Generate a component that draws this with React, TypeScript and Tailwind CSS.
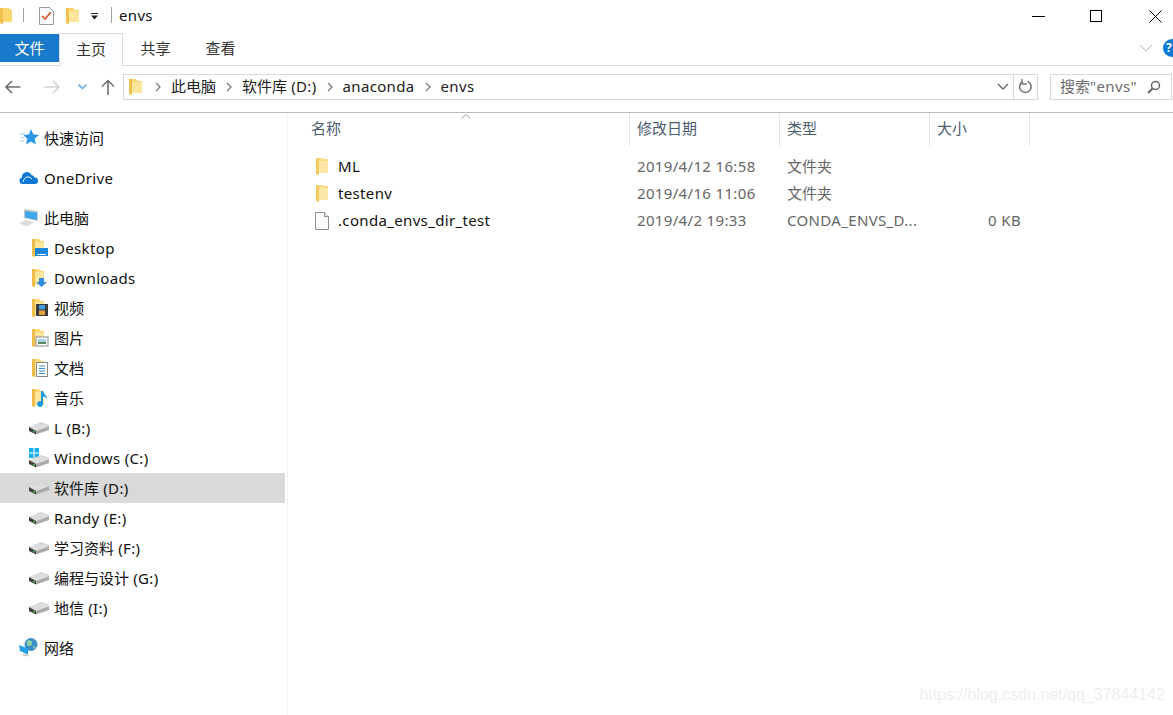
import React from "react";

const FONT = "font-['Noto_Sans','Noto_Sans_CJK_SC',sans-serif]";

// Latin runs come out a little narrower than in the picture, so they get some tracking
const T = ({ children }: { children: string }) => (
  <>
    {children.split(/([\u0000-\u02ff]+)/).map((part, i) =>
      /^[\u0000-\u02ff]+$/.test(part) ? (
        <span key={i} className="tracking-[0.34px]">{part}</span>
      ) : (
        part
      )
    )}
  </>
);

const Folder = ({ className = "" }: { className?: string }) => (
  <svg width="13" height="18" viewBox="0 0 13 18" className={className}>
    <path d="M0 1h7l2 2h4v12H3v2l-3-1z" fill="#fbd56e" />
    <path d="M3 4h10v11H3z" fill="#fde59b" />
    <path d="M0 1h3v16l-3-1z" fill="#f2c04f" />
  </svg>
);

const Drive = () => (
  <svg width="20" height="14" viewBox="0 0 20 14">
    <path d="M0 6 12 1l8 3v2L7 10z" fill="#d0d0d0" />
    <path d="M0 6l7 4 13-5-8-3z" fill="#dedede" />
    <path d="M0 6l7 4v3.500L0 10z" fill="#3e3e3e" />
    <path d="M7 10l13-4.500V9L7 13.500z" fill="#a9a9a9" />
    <rect x="4" y="10" width="2" height="1.500" fill="#3ec85a" />
  </svg>
);

const NavFolder = ({ children }: { children?: React.ReactNode }) => (
  <svg width="20" height="20" viewBox="0 0 20 20">
    <path d="M3 1h7l2 2h3v14H6v2l-3-1z" fill="#fbd56e" />
    <path d="M6 4h9v13H6z" fill="#fde59b" />
    <path d="M3 1h3v18l-3-1z" fill="#eebb4d" />
    {children}
  </svg>
);

const navIcons: Record<string, React.ReactNode> = {
  star: (
    <svg width="20" height="20" viewBox="0 0 20 20">
      <path d="M12 1l2.300 5.300 5.700.6-4.300 3.900 1.300 5.700-5-3-5 3 1.300-5.700-3.800-3.600 5.500-.9z" fill="#2a98e6" />
      <path d="M1 6h5M2 9.500h3M1 13h4" stroke="#8ecbf2" strokeWidth="1" />
    </svg>
  ),
  cloud: (
    <svg width="20" height="20" viewBox="0 0 20 20">
      <path d="M3.500 16a3.300 3.300 0 0 1-.5-6.500A5 5 0 0 1 12.500 7a4 4 0 0 1 3 2.500 3.300 3.300 0 0 1 1 6.500z" fill="#0a78d4" />
      <path d="M4 14c1-4 3-5 5-5s3 1 4 2" fill="none" stroke="#fff" strokeWidth="1" />
    </svg>
  ),
  pc: (
    <svg width="20" height="20" viewBox="0 0 20 20">
      <path d="M5 1l14 2v10L5 10z" fill="#c9c9c9" />
      <path d="M6 3l12 1.500v7.500L6 9.500z" fill="#3fa7ec" />
      <path d="M0 15l7-3 8 2-7 4.500z" fill="#dcdcdc" />
    </svg>
  ),
  desktop: (
    <NavFolder>
      <rect x="6" y="10" width="13" height="8" fill="#1a86d9" />
      <rect x="8" y="16" width="9" height="1" fill="#fff" />
    </NavFolder>
  ),
  downloads: (
    <NavFolder>
      <path d="M10 10h5v4h3l-5.500 5L7 14h3z" fill="#2f8edb" />
    </NavFolder>
  ),
  video: (
    <NavFolder>
      <rect x="7" y="6" width="12" height="12" fill="#3a3a3a" />
      <rect x="10" y="7" width="6" height="4.500" fill="#3f9de0" />
      <rect x="10" y="12.500" width="6" height="4.500" fill="#e2a13a" />
    </NavFolder>
  ),
  pictures: (
    <NavFolder>
      <rect x="7" y="9" width="12" height="9" fill="#fff" stroke="#8a8a8a" />
      <rect x="9" y="11" width="8" height="3" fill="#a8d0ec" />
      <rect x="9" y="14" width="8" height="2" fill="#5b8a5b" />
    </NavFolder>
  ),
  docs: (
    <NavFolder>
      <rect x="7.500" y="4.500" width="11" height="14" fill="#fff" stroke="#8a8a8a" />
      <path d="M10 8h6M10 10.500h6M10 13h6M10 15.500h6" stroke="#3f8fd0" />
    </NavFolder>
  ),
  music: (
    <NavFolder>
      <path d="M12 3h2c.5 3 4 4 4 8-1-1.500-2.500-2.500-4-2.500V16a3 3 0 1 1-2-2.800z" fill="#1b9ae8" />
    </NavFolder>
  ),
  drive: <Drive />,
  windows: (
    <svg width="20" height="20" viewBox="0 0 20 20">
      <path d="M0 0h4.500v4.500H0zM5.500 0H10v4.500H5.500zM0 5.500h4.500V10H0zM5.500 5.500H10V10H5.500z" fill="#19b0f0" />
      <g transform="translate(0 6)">
        <Drive />
      </g>
    </svg>
  ),
  network: (
    <svg width="20" height="20" viewBox="0 0 20 20">
      <circle cx="12" cy="6.500" r="6.500" fill="#3c8fc6" />
      <path d="M8 3c3-2 6 0 5 3s-4 2-5 1zM14 8l3 1-2 3z" fill="#8fd0a0" />
      <path d="M0 7l9 3.500v6L1 13z" fill="#22a0ea" />
      <path d="M2 17l6 1.500 3-1-5-2z" fill="#c9c9c9" />
    </svg>
  ),
};

type NavItem = { label: string; icon: string; child?: boolean; selected?: boolean; gap?: boolean };

const navItems: NavItem[] = [
  { label: "快速访问", icon: "star" },
  { label: "OneDrive", icon: "cloud", gap: true },
  { label: "此电脑", icon: "pc", gap: true },
  { label: "Desktop", icon: "desktop", child: true },
  { label: "Downloads", icon: "downloads", child: true },
  { label: "视频", icon: "video", child: true },
  { label: "图片", icon: "pictures", child: true },
  { label: "文档", icon: "docs", child: true },
  { label: "音乐", icon: "music", child: true },
  { label: "L (B:)", icon: "drive", child: true },
  { label: "Windows (C:)", icon: "windows", child: true },
  { label: "软件库 (D:)", icon: "drive", child: true, selected: true },
  { label: "Randy (E:)", icon: "drive", child: true },
  { label: "学习资料 (F:)", icon: "drive", child: true },
  { label: "编程与设计 (G:)", icon: "drive", child: true },
  { label: "地信 (I:)", icon: "drive", child: true },
  { label: "网络", icon: "network", gap: true },
];

const files = [
  { name: "ML", date: "2019/4/12 16:58", type: "文件夹", size: "", folder: true },
  { name: "testenv", date: "2019/4/16 11:06", type: "文件夹", size: "", folder: true },
  { name: ".conda_envs_dir_test", date: "2019/4/2 19:33", type: "CONDA_ENVS_D...", size: "0 KB", folder: false },
];

const Crumb = () => (
  <svg width="6" height="10" viewBox="0 0 6 10" className="shrink-0">
    <path d="M1 1l4 4-4 4" fill="none" stroke="#7a7a7a" strokeWidth="1.300" />
  </svg>
);

export default function App() {
  return (
    <div className={`${FONT} relative flex h-[715px] w-[1173px] flex-col overflow-hidden bg-white text-[15px] text-[#111]`}>
      {/* title bar */}
      <div className="flex h-[33px] shrink-0 items-center">
        <svg width="12" height="17" viewBox="0 0 12 17" className="mb-[3px]">
          <path d="M0 1h8l4 2v12H3v2l-3-1z" fill="#fbd56e" />
          <path d="M0 1h3v16l-3-1z" fill="#f2c04f" />
        </svg>
        <div className="ml-[11px] mb-[3px] h-[14px] w-px bg-[#a0a0a0]" />
        <svg width="15" height="18" viewBox="0 0 15 18" className="ml-[15px] mb-[1px]">
          <path d="M.5.500h10l4 4v13H.500z" fill="#fafafa" stroke="#9a9a9a" />
          <path d="M3 9l3 3 6-7" fill="none" stroke="#e0552a" strokeWidth="1.600" />
        </svg>
        <Folder className="ml-[12px] mb-[1px]" />
        <svg width="7" height="7" viewBox="0 0 7 7" className="ml-[12px]">
          <path d="M0 0h7v1H0zM0 2.500h7L3.500 6.500z" fill="#222" />
        </svg>
        <div className="ml-[13px] mb-[3px] h-[16px] w-px bg-[#a0a0a0]" />
        <span className="ml-[7px] mb-[2px] leading-none"><T>envs</T></span>
        <div className="ml-auto flex items-center">
          <svg width="13" height="13" viewBox="0 0 13 13">
            <path d="M0 6.500h13" stroke="#000" />
          </svg>
          <svg width="13" height="13" viewBox="0 0 13 13" className="ml-[45px]">
            <rect x=".5" y=".5" width="11" height="11" fill="none" stroke="#000" />
          </svg>
          <svg width="13" height="13" viewBox="0 0 13 13" className="ml-[46px] mr-[11px]">
            <path d="M.5.500l12 12M12.500.500l-12 12" stroke="#000" />
          </svg>
        </div>
      </div>

      {/* ribbon tabs */}
      <div className="flex h-[33px] shrink-0 items-stretch border-b border-[#dadbdc]">
        <div className="mb-[3px] mt-px flex w-[59px] items-center justify-center bg-[#1979ca] text-white">文件</div>
        <div className="-mb-px flex w-[64px] items-center justify-center border-x border-t border-[#dadbdc] bg-[#fcfdfe] pb-[2px] text-[#333]">主页</div>
        <div className="flex w-[65px] items-center justify-center pb-[2px] text-[#333]">共享</div>
        <div className="flex w-[65px] items-center justify-center pb-[2px] text-[#333]">查看</div>
        <div className="ml-auto flex items-center">
          <svg width="14" height="8" viewBox="0 0 14 8" className="mb-[3px]">
            <path d="M1 1l6 6 6-6" fill="none" stroke="#b4b4b4" />
          </svg>
          <div className="mb-[3px] ml-[10px] flex h-[18px] w-[10px] items-center overflow-hidden rounded-l-full bg-[#0a78d4] pl-[3px] text-[12px] font-bold text-white">?</div>
        </div>
      </div>

      {/* address row */}
      <div className="flex h-[47px] shrink-0 items-center border-b border-[#bcbcbc] pb-[5px] pl-[5px] pr-px">
        <svg width="16" height="14" viewBox="0 0 16 14">
          <path d="M15.500 7H1M7 1 1 7l6 6" fill="none" stroke="#6e6e6e" strokeWidth="1.600" />
        </svg>
        <svg width="16" height="14" viewBox="0 0 16 14" className="ml-[23px]">
          <path d="M.5 7H15M9 1l6 6-6 6" fill="none" stroke="#d2d2d2" strokeWidth="1.600" />
        </svg>
        <svg width="9" height="6" viewBox="0 0 9 6" className="ml-[18px]">
          <path d="M.5.500l4 4 4-4" fill="none" stroke="#5ba3e0" strokeWidth="1.500" />
        </svg>
        <svg width="14" height="16" viewBox="0 0 14 16" className="ml-[14px]">
          <path d="M7 16V1.500M1 7.500l6-6 6 6" fill="none" stroke="#6e6e6e" strokeWidth="1.600" />
        </svg>
        <div className="ml-[8px] flex h-[26px] w-[916px] items-center border border-[#d9d9d9] pl-[5px]">
          <Folder />
          <div className="ml-[13px] flex items-center text-[#222]">
            <Crumb />
            <span className="ml-[10px]">此电脑</span>
            <span className="ml-[10px]"><Crumb /></span>
            <span className="ml-[10px]"><T>软件库 (D:)</T></span>
            <span className="ml-[10px]"><Crumb /></span>
            <span className="ml-[10px]"><T>anaconda</T></span>
            <span className="ml-[10px]"><Crumb /></span>
            <span className="ml-[10px]"><T>envs</T></span>
          </div>
          <svg width="12" height="7" viewBox="0 0 12 7" className="ml-auto mr-[4px]">
            <path d="M1 1l5 5 5-5" fill="none" stroke="#666" strokeWidth="1.400" />
          </svg>
          <div className="flex h-full w-[24px] items-center justify-center border-l border-[#d9d9d9]">
            <svg width="15" height="15" viewBox="0 0 15 15">
              <path d="M9.500 2.300a5.800 5.800 0 1 1-4.500.1" fill="none" stroke="#777" strokeWidth="1.600" />
              <path d="M4 0v5h5" fill="none" stroke="#777" strokeWidth="1.300" />
            </svg>
          </div>
        </div>
        <div className="ml-[12px] flex h-[26px] w-[122px] items-center justify-between border border-[#d9d9d9] pl-[9px] pr-[10px] text-[#6d6d6d]">
          <span><T>搜索"envs"</T></span>
          <svg width="14" height="14" viewBox="0 0 14 14">
            <circle cx="8.500" cy="5.500" r="4" fill="none" stroke="#666" strokeWidth="1.500" />
            <path d="M5.500 8.500 1 13" stroke="#666" strokeWidth="2" />
          </svg>
        </div>
      </div>

      <div className="flex min-h-0 flex-1">
        {/* nav pane */}
        <nav className="w-[288px] shrink-0 border-r border-[#f3f3f3] pt-[10px]">
          {navItems.map((item) => (
            <div
              key={item.label}
              className={`mr-[2px] flex h-[30px] items-center ${item.gap ? "mt-[10px]" : ""} ${item.child ? "pl-[29px]" : "pl-[19px]"} ${item.selected ? "bg-[#d9d9d9]" : ""}`}
            >
              <span className="flex h-[20px] w-[20px] shrink-0 items-center justify-center">{navIcons[item.icon]}</span>
              <span className="ml-[5px]"><T>{item.label}</T></span>
            </div>
          ))}
        </nav>

        {/* file list */}
        <main className="relative w-[742px] shrink-0">
          <div className="grid h-[33px] grid-cols-[342px_150px_150px_100px] text-[#4c5c70]">
            {["名称", "修改日期", "类型", "大小"].map((h, i) => (
              <div key={h} className={`flex items-center border-r border-[#e5e5e5] pb-[2px] ${i === 0 ? "pl-[23px]" : "pl-[7px]"}`}>
                {h}
              </div>
            ))}
          </div>
          <svg width="10" height="5" viewBox="0 0 10 5" className="absolute left-[173px] top-[1px]">
            <path d="M.5 4.500l4.500-4 4.500 4" fill="none" stroke="#a0a0a0" />
          </svg>
          <div className="pt-[7px]">
            {files.map((f) => (
              <div key={f.name} className="grid h-[27px] grid-cols-[342px_150px_150px_100px] items-center">
                <div className="flex items-center pl-[26px]">
                  <span className="flex w-[16px] justify-center">
                    {f.folder ? (
                      <svg width="12" height="17" viewBox="0 0 12 17">
                        <path d="M0 0h7l1 1h4v14H3v2l-3-1z" fill="#f9dc8a" />
                        <path d="M3 3h9v12H3z" fill="#fde7a8" />
                        <path d="M0 0h3v17l-3-1z" fill="#f3cb63" />
                      </svg>
                    ) : (
                      <svg width="14" height="18" viewBox="0 0 14 18">
                        <path d="M.5.500h9l4 4v13H.500z" fill="#fbfbfb" stroke="#8f8f8f" />
                        <path d="M9.500.500v4h4" fill="#f0f0f0" stroke="#8f8f8f" />
                      </svg>
                    )}
                  </span>
                  <span className="ml-[8px]"><T>{f.name}</T></span>
                </div>
                <div className="pl-[7px] text-[#666]"><T>{f.date}</T></div>
                <div className="pl-[7px] text-[#666]"><T>{f.type}</T></div>
                <div className="pr-[9px] text-right text-[#666]"><T>{f.size}</T></div>
              </div>
            ))}
          </div>
        </main>
      </div>

      <span className="absolute bottom-[8px] right-[8px] font-['Liberation_Sans',sans-serif] text-[16px] text-[#eeeeee]">
        https://blog.csdn.net/qq_37844142
      </span>
    </div>
  );
}
